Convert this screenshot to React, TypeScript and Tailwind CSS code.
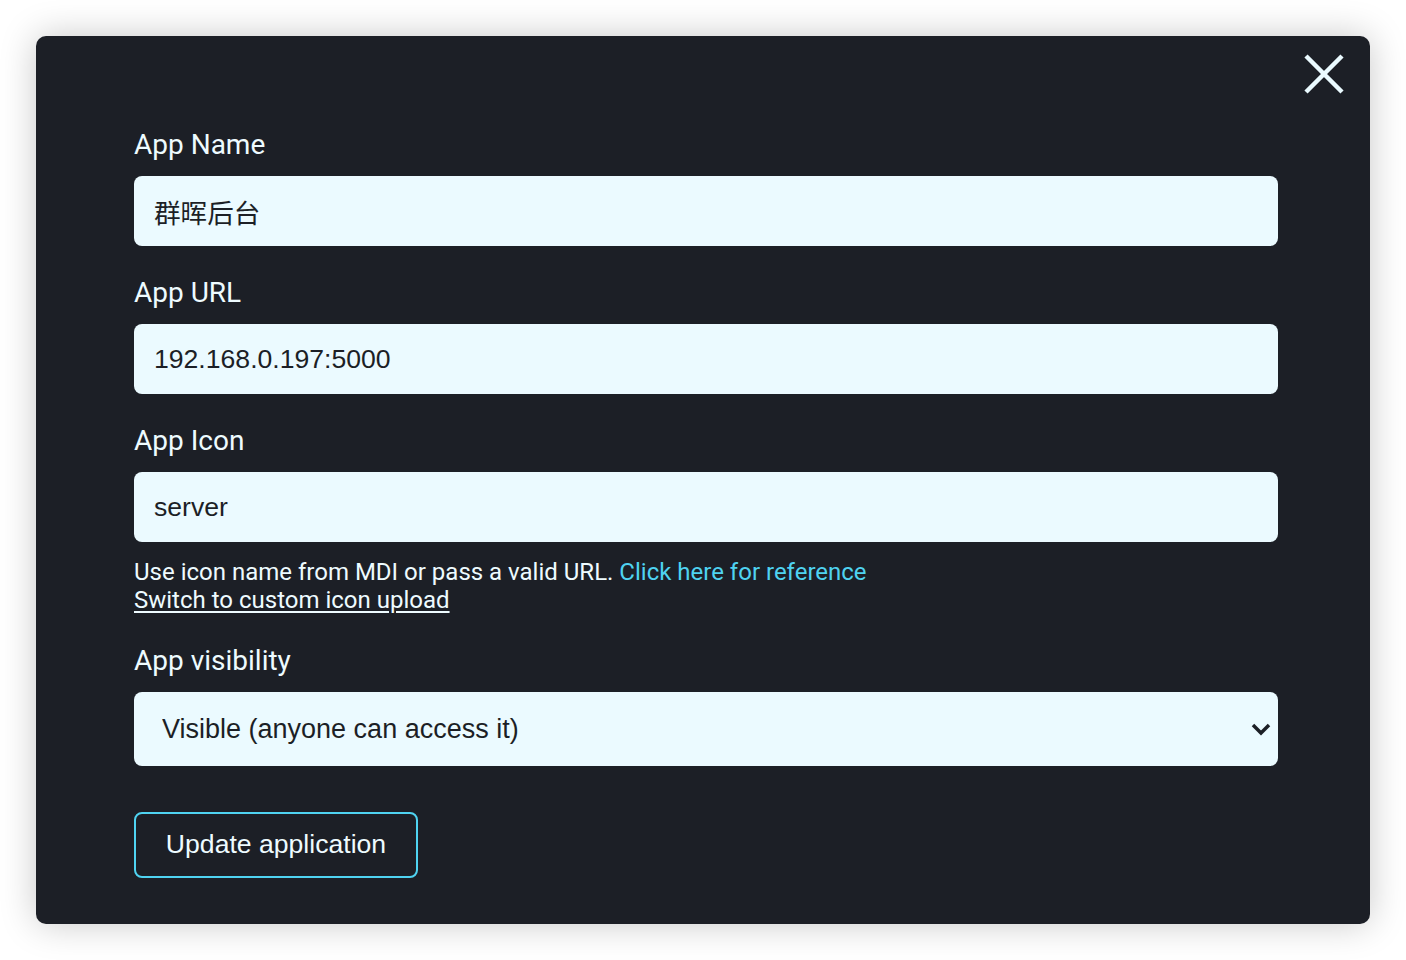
import { useState } from 'react';

const labelCls = "block text-[28px] leading-[32px] text-[#eefbff] font-['Roboto',sans-serif]";
const inputCls =
  "block w-full h-[70px] rounded-[8px] bg-[#ebfaff] px-[20px] text-[26.6px] text-[#1c1f26] outline-none font-['Liberation_Sans','Noto_Sans_CJK_SC',sans-serif]";

function CloseIcon() {
  return (
    <svg width="42" height="42" viewBox="0 0 42 42" fill="none">
      <path d="M3 3 L39 39 M39 3 L3 39" stroke="#eafaff" strokeWidth="4.5" strokeLinecap="butt" />
    </svg>
  );
}

function Chevron() {
  return (
    <svg width="20" height="14" viewBox="0 0 20 14" fill="none">
      <path d="M2 3 L10 11 L18 3" stroke="#1c1f26" strokeWidth="3.5" />
    </svg>
  );
}

export default function App() {
  const [name, setName] = useState('群晖后台');
  const [url, setUrl] = useState('192.168.0.197:5000');
  const [icon, setIcon] = useState('server');
  const [visibility, setVisibility] = useState('visible');

  return (
    <div className="min-h-[960px] bg-white p-[36px]">
      <div className="relative w-[1334px] h-[888px] rounded-[10px] bg-[#1c1f26] pl-[98px] pt-[93px] shadow-[0_0_36px_rgba(0,0,0,0.22)]">
        {/* Close button */}
        <button className="absolute right-[25px] top-[17px]">
          <CloseIcon />
        </button>

        <div className="w-[1144px]">
          <label className={labelCls}>App Name</label>
          <input className={`${inputCls} mt-[15px]`} value={name} onChange={(e) => setName(e.target.value)} />

          <label className={`${labelCls} mt-[31px]`}>App URL</label>
          <input className={`${inputCls} mt-[15px]`} value={url} onChange={(e) => setUrl(e.target.value)} />

          <label className={`${labelCls} mt-[31px]`}>App Icon</label>
          <input className={`${inputCls} mt-[15px]`} value={icon} onChange={(e) => setIcon(e.target.value)} />

          {/* Icon helper */}
          <div className="mt-[16px] text-[24px] leading-[28px] text-[#eefbff] font-['Roboto',sans-serif]">
            <div>
              Use icon name from MDI or pass a valid URL.{' '}
              <a className="text-[#4fd3f1]">Click here for reference</a>
            </div>
            <a className="underline underline-offset-[3px]">Switch to custom icon upload</a>
          </div>

          <label className={`${labelCls} mt-[31px]`}>App visibility</label>
          <div className="relative mt-[15px]">
            <select
              value={visibility}
              onChange={(e) => setVisibility(e.target.value)}
              className="block w-full h-[74px] appearance-none rounded-[8px] bg-[#ebfaff] pl-[28px] text-[27px] text-[#1c1f26] outline-none font-['Liberation_Sans',sans-serif]"
            >
              <option value="visible">Visible (anyone can access it)</option>
              <option value="hidden">Hidden (only admins)</option>
            </select>
            <div className="pointer-events-none absolute right-[7px] top-[30px]">
              <Chevron />
            </div>
          </div>

          <button className="mt-[46px] h-[66px] w-[284px] rounded-[8px] border-2 border-[#4fd3f1] text-[26.6px] text-[#eefbff] font-['Liberation_Sans',sans-serif]">
            Update application
          </button>
        </div>
      </div>
    </div>
  );
}
